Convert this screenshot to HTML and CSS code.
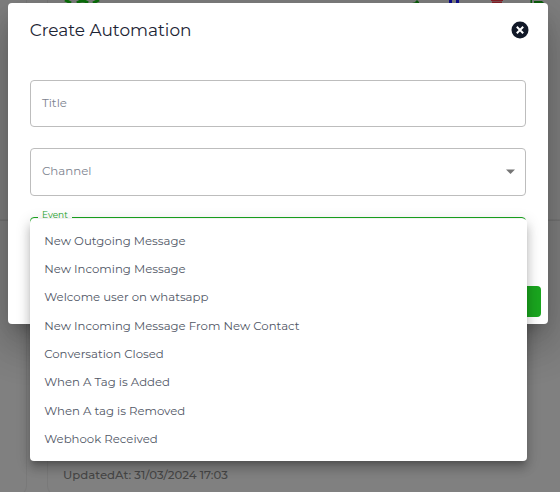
FILE: index.html
```html
<!DOCTYPE html>
<html lang="en">
<head>
<meta charset="utf-8">
<title>Create Automation</title>
<link rel="stylesheet" href="styles.css">
</head>
<body>
<div class="page">
  <div class="row row-top">
    <div class="card card-side"></div>
    <div class="card card-main">
      <svg class="card-icons" width="513" height="4" viewBox="47 0 513 4">
        <path d="M65 0l6 3M99 0l-6 3" stroke="#0b720b" stroke-width="3"/>
        <path d="M77 3q5.500-4 11 0" stroke="#0b720b" stroke-width="3" fill="none"/>
        <path d="M412 2h3l2-2 2 2v1h-3z" fill="#0b600b"/>
        <path d="M449 0h3v3h-3zM456 0h3v3h-3z" fill="#0b0b90"/>
        <path d="M491 0h12v1h-12zM492 1.500h10v2h-10z" fill="#8a2028"/>
        <path d="M530.500 0h1.500v3h-1.500zM534 1h8l2 2h-10z" fill="#0b600b"/>
      </svg>
    </div>
  </div>
  <div class="row row-bottom">
    <div class="card card-side"></div>
    <div class="card card-main"><p class="updated">UpdatedAt: 31/03/2024 17:03</p></div>
  </div>
</div>
<div class="overlay">
  <section class="dialog">
    <header class="dialog-head">
      <h1>Create Automation</h1>
      <svg class="close" width="18" height="18" viewBox="0 0 18 18">
        <circle cx="9" cy="9" r="8.500" fill="#111827"/>
        <path d="M5.800 5.800l6.400 6.400M12.200 5.800l-6.400 6.400" stroke="#fff" stroke-width="2"/>
      </svg>
    </header>
    <div class="field field-title"><span>Title</span></div>
    <div class="field field-channel"><span>Channel</span>
      <svg class="caret" width="9" height="5" viewBox="0 0 9 5"><path d="M0 .5h9L4.500 5z" fill="#757575"/></svg>
    </div>
    <div class="field field-event"><span class="legend">Event</span></div>
    <button class="submit" type="button" aria-label="Submit"></button>
  </section>
</div>
<ul class="menu">
  <li>New Outgoing Message</li>
  <li>New Incoming Message</li>
  <li>Welcome user on whatsapp</li>
  <li>New Incoming Message From New Contact</li>
  <li>Conversation Closed</li>
  <li>When A Tag is Added</li>
  <li>When A tag is Removed</li>
  <li>Webhook Received</li>
</ul>
</body>
</html>
```
FILE: styles.css
```css
* { box-sizing: border-box; }
body {
  margin: 0;
  width: 560px;
  height: 492px;
  overflow: hidden;
  position: relative;
  background: #808080;
  font-family: Montserrat, Inter, sans-serif;
}
.page { height: 492px; overflow: hidden; }
.row { display: flex; gap: 20px; }
.row-top { height: 221px; border-bottom: 1px solid #747474; }
.row-bottom { height: 271px; }
.card { border: 1px solid #797979; border-top: 0; }
.card-side { width: 27px; flex: none; border-left: 0; border-radius: 0 0 10px 0; }
.card-main { width: 513px; flex: none; border-right: 0; border-radius: 0 0 0 10px; }
.row-bottom .card { height: 275px; }
.card-icons { display: block; margin-left: -1px; }
.updated { margin: 247px 0 0 15px; font-size: 11.720px; line-height: 14px; font-weight: 500; color: #474747; }
.overlay { position: absolute; inset: 0; padding: 3px 12px 0 8px; }
.dialog {
  height: 321px;
  padding: 18px 22px 0;
  border-radius: 4px;
  background: #fff;
  display: flex;
  flex-direction: column;
  box-shadow: 0 11px 15px -7px rgba(0,0,0,.2), 0 24px 38px 3px rgba(0,0,0,.14), 0 9px 46px 8px rgba(0,0,0,.12);
}
.dialog-head { height: 59px; display: flex; justify-content: space-between; align-items: flex-start; }
h1 { margin: 0 0 0 -.3px; font-size: 16.950px; line-height: 19px; font-weight: 400; color: #1c2434; }
.close { margin-right: -3px; }
.field {
  width: 496px;
  flex: none;
  border: 1px solid #bdbdbd;
  border-radius: 4px;
  display: flex;
  align-items: center;
  justify-content: space-between;
  padding: 0 11px 2px;
  font-size: 11.800px;
  color: #7d838f;
}
.field-title { height: 47px; }
.field-channel { height: 48px; margin-top: 21px; padding-bottom: 3px; }
.caret { margin: 2px -1px 0 0; }
.field-event { height: 48px; margin-top: 21px; border-color: #1aa51f; align-items: flex-start; padding: 0 7px; }
.legend { margin-top: -9px; padding: 0 4px; background: #fff; font-size: 9px; line-height: 11px; color: #1aa51f; }
.submit { align-self: flex-end; flex: none; width: 60px; height: 31px; margin: 21px -15px 0 0; border: 0; border-radius: 4px; background: #1aa51f; }
.menu {
  position: absolute;
  left: 30px;
  top: 219px;
  width: 497px;
  height: 242px;
  margin: 0;
  padding: 7.800px 14.200px;
  list-style: none;
  background: #fff;
  border-radius: 4px;
  box-shadow: 0 5px 5px -3px rgba(0,0,0,.2), 0 8px 10px 1px rgba(0,0,0,.14), 0 3px 14px 2px rgba(0,0,0,.12);
  font-size: 11.720px;
  color: #515766;
}
.menu li { height: 28.330px; line-height: 28.200px; white-space: nowrap; }
```
